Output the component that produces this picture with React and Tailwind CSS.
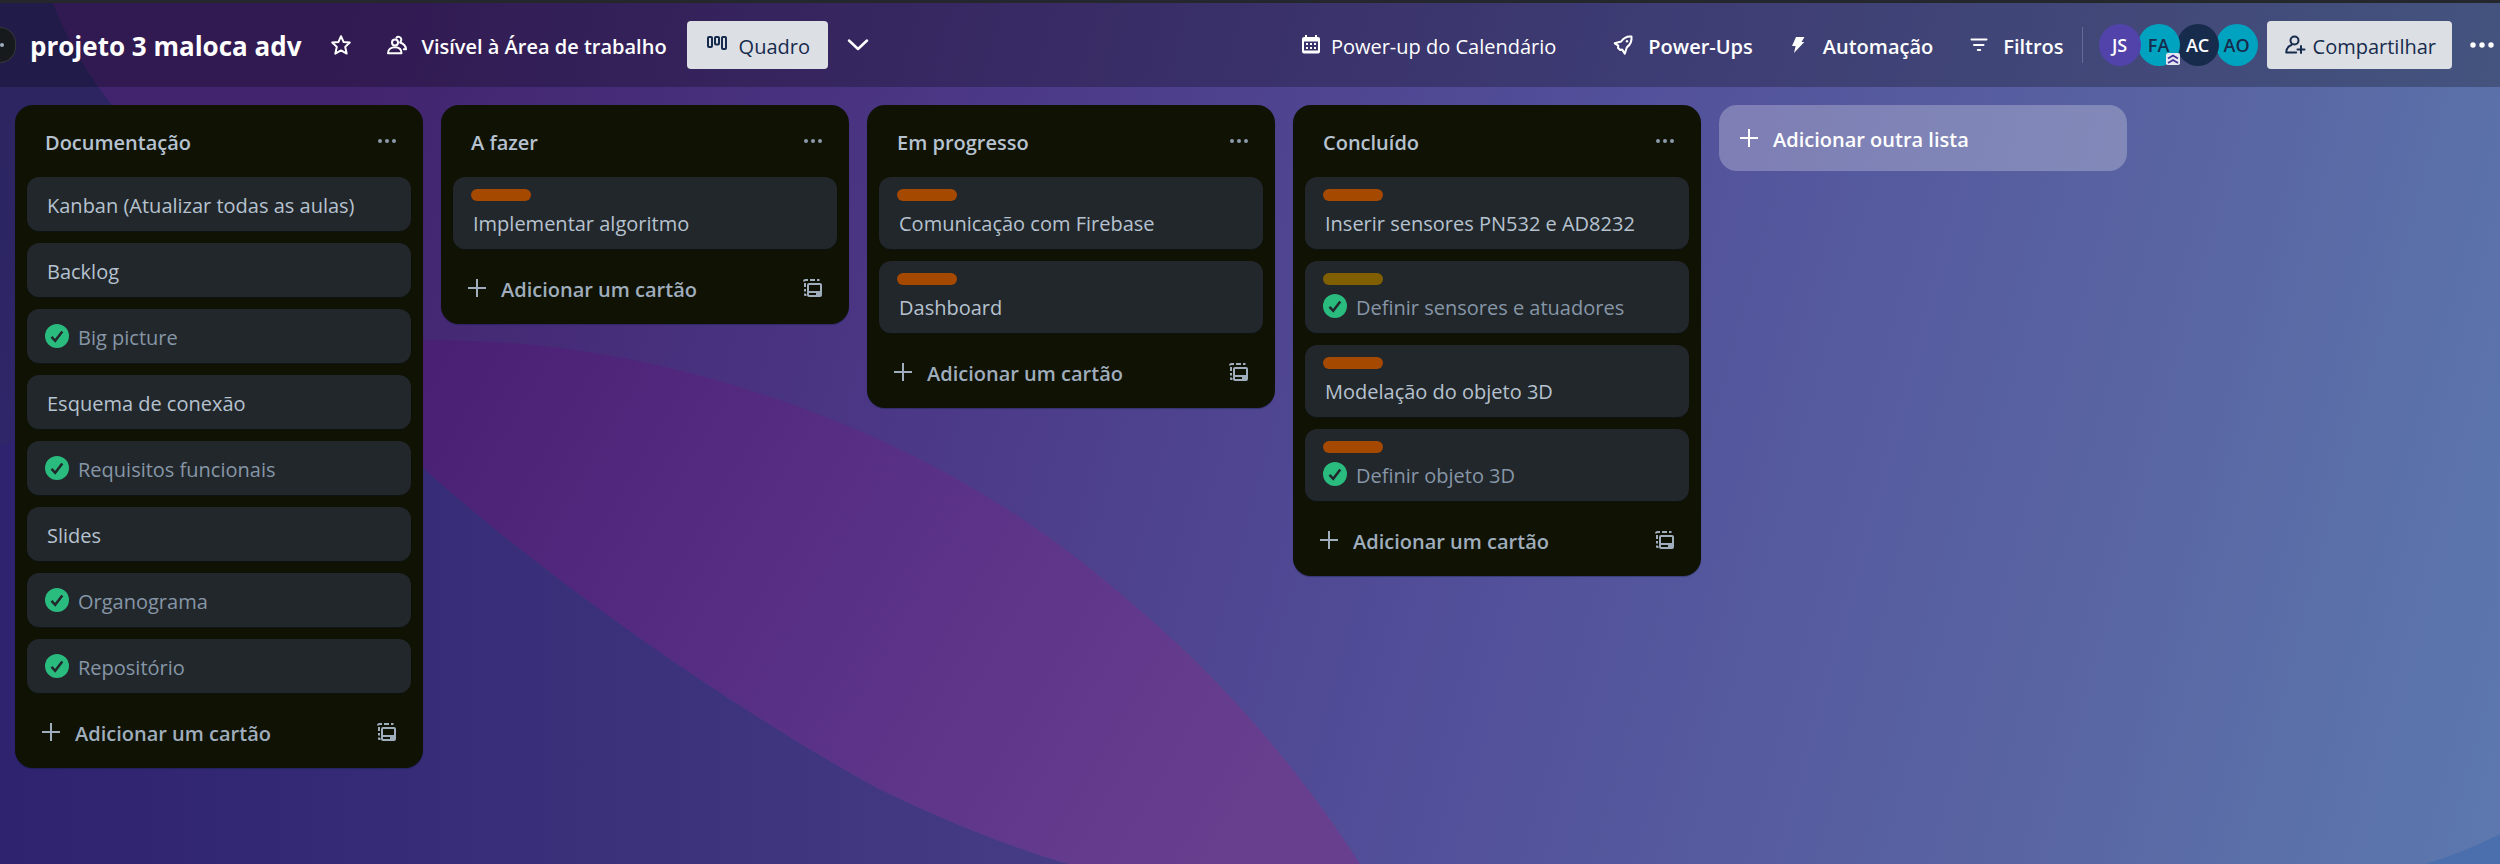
import React from "react";

const LISTS = [
  {
    title: "Documentação",
    cards: [
      { text: "Kanban (Atualizar todas as aulas)" },
      { text: "Backlog" },
      { text: "Big picture", done: true },
      { text: "Esquema de conexão" },
      { text: "Requisitos funcionais", done: true },
      { text: "Slides" },
      { text: "Organograma", done: true },
      { text: "Repositório", done: true },
    ],
  },
  { title: "A fazer", cards: [{ text: "Implementar algoritmo", label: "orange" }] },
  {
    title: "Em progresso",
    cards: [
      { text: "Comunicação com Firebase", label: "orange" },
      { text: "Dashboard", label: "orange" },
    ],
  },
  {
    title: "Concluído",
    cards: [
      { text: "Inserir sensores PN532 e AD8232", label: "orange" },
      { text: "Definir sensores e atuadores", label: "yellow", done: true },
      { text: "Modelação do objeto 3D", label: "orange" },
      { text: "Definir objeto 3D", label: "orange", done: true },
    ],
  },
];

const LABEL = { orange: "bg-[#a54800]", yellow: "bg-[#7f5f01]" };

const MEMBERS = [
  { initials: "JS", style: "bg-[#5243aa] text-white" },
  { initials: "FA", style: "bg-[#00a3bf] text-[#172b4d]", admin: true },
  { initials: "AC", style: "bg-[#172b4d] text-white" },
  { initials: "AO", style: "bg-[#00a3bf] text-[#172b4d]" },
];

function Icon({ children }) {
  return (
    <svg
      viewBox="0 0 24 24"
      className="size-6 shrink-0"
      fill="none"
      stroke="currentColor"
      strokeWidth="2"
      strokeLinecap="round"
      strokeLinejoin="round"
      aria-hidden="true"
    >
      {children}
    </svg>
  );
}

const StarIcon = () => (
  <Icon>
    <path d="M12 3.2l2.500 5.700 6.300.6-4.600 4.400 1.500 6.700-5.700-3.200-5.700 3.200 1.500-6.700-4.600-4.400 6.300-.6z" />
  </Icon>
);

const PeopleIcon = () => (
  <Icon>
    <circle cx="10" cy="9.500" r="3" />
    <path d="M3 20.200c0-3.700 3-6 7-6s6.500 2.300 6.500 6z" />
    <path d="M11.500 4.600c1.200-1.500 4.500-1 4.800 1.700.1 1.500-.4 2.400-1.200 3.200 3 1 5.600 3.200 5.900 6.800h-2.200" />
  </Icon>
);

const BoardIcon = () => (
  <Icon>
    <rect x="3" y="4" width="4" height="10" rx="1" />
    <rect x="10" y="4" width="4" height="7.500" rx="1" />
    <rect x="17" y="4" width="4" height="12" rx="1" />
  </Icon>
);

const ChevronIcon = () => (
  <Icon>
    <path d="M3 7.500l9 8.500 9-8.500" strokeWidth="2.500" />
  </Icon>
);

const CalendarIcon = () => (
  <Icon>
    <path
      fill="currentColor"
      stroke="none"
      fillRule="evenodd"
      d="M6 2h2v2h8V2h2v2h1a2 2 0 0 1 2 2v12.500a2 2 0 0 1-2 2H5a2 2 0 0 1-2-2V6a2 2 0 0 1 2-2h1zM5 8.500v9h14v-9z"
    />
    <path fill="currentColor" stroke="none" d="M7 10h2v2H7zm4 0h2v2h-2zm4 0h2v2h-2zM7 14h2v2H7zm4 0h2v2h-2zm4 0h2v2h-2z" />
  </Icon>
);

const RocketIcon = () => (
  <Icon>
    <path d="M19.500 3.500c-4.500-.6-7.500.8-10.300 5L2.700 10.300l3.600 2.400-.4 2 2.300 2.300 2-.4 2.600 4 2-6.200c4-3 5.200-6.500 4.700-10.900z" />
    <circle cx="15" cy="8.200" r="1.200" fill="currentColor" stroke="none" />
  </Icon>
);

const BoltIcon = () => (
  <Icon>
    <path fill="currentColor" stroke="none" d="M9 4h8.500l-3 5h2.800L7 20l1.600-7H5z" />
  </Icon>
);

const FilterIcon = () => (
  <Icon>
    <path d="M4.500 6.500h15M7 12h9.500M10.800 17h2.400" />
  </Icon>
);

const AddPersonIcon = () => (
  <Icon>
    <circle cx="11.500" cy="7.500" r="4" />
    <path d="M13.200 19.500H3.200c0-3.700 2-6.200 5.300-7.500" />
    <path d="M18 13v7M14.500 16.500h7" />
  </Icon>
);

const DotsIcon = () => (
  <Icon>
    <g fill="currentColor" stroke="none">
      <circle cx="5" cy="12" r="2" />
      <circle cx="12" cy="12" r="2" />
      <circle cx="19" cy="12" r="2" />
    </g>
  </Icon>
);

const WideDotsIcon = () => (
  <Icon>
    <g fill="currentColor" stroke="none">
      <circle cx="3" cy="12" r="2.700" />
      <circle cx="12" cy="12" r="2.700" />
      <circle cx="21" cy="12" r="2.700" />
    </g>
  </Icon>
);

const PlusIcon = () => (
  <Icon>
    <path d="M12 3v18M3 12h18" strokeLinecap="butt" />
  </Icon>
);

const TemplateIcon = () => (
  <Icon>
    <path d="M3 5.500C3 4.500 3.500 4 4.500 4H7M9 4h5M16 4h2.500M4 7v4M4 13v2.500M4 17.500V19h1.500" strokeLinecap="butt" />
    <rect x="7" y="8" width="13" height="12" rx="1" />
    <path d="M7 16h13" />
    <path d="M15 18h4" strokeLinecap="butt" />
  </Icon>
);

const CheckIcon = () => (
  <svg viewBox="0 0 24 24" className="size-6 shrink-0" role="img" aria-label="Concluído">
    <circle cx="12" cy="12" r="12" fill="#2abb7f" />
    <path d="M6.500 12.800l3.700 4L17.300 7.500" fill="none" stroke="#22272b" strokeWidth="2.500" />
  </svg>
);

function Backdrop() {
  return (
    <svg
      viewBox="0 0 2500 864"
      preserveAspectRatio="none"
      className="absolute inset-0 size-full"
      aria-hidden="true"
    >
      <defs>
        <linearGradient id="sky" gradientUnits="userSpaceOnUse" x1="300" y1="200" x2="2500" y2="800">
          <stop offset="0" stopColor="#42236d" />
          <stop offset="0.280" stopColor="#4b3886" />
          <stop offset="0.550" stopColor="#52509a" />
          <stop offset="0.800" stopColor="#5965a3" />
          <stop offset="1" stopColor="#5c78ae" />
        </linearGradient>
        <linearGradient id="deep" gradientUnits="userSpaceOnUse" x1="0" y1="864" x2="1060" y2="864">
          <stop offset="0" stopColor="#2f226e" />
          <stop offset="0.400" stopColor="#362c77" />
          <stop offset="1" stopColor="#453c85" />
        </linearGradient>
        <linearGradient id="petal" gradientUnits="userSpaceOnUse" x1="420" y1="400" x2="1220" y2="864">
          <stop offset="0" stopColor="#4a2074" />
          <stop offset="0.500" stopColor="#583086" />
          <stop offset="1" stopColor="#683f8f" />
        </linearGradient>
        <linearGradient id="edge" gradientUnits="userSpaceOnUse" x1="0" y1="0" x2="0" y2="445">
          <stop offset="0" stopColor="#2b2560" />
          <stop offset="1" stopColor="#2e2668" />
        </linearGradient>
      </defs>
      <rect width="2500" height="864" fill="url(#sky)" />
      <path d="M52 0C70 50 100 90 112 105L300 400L0 445V0Z" fill="url(#edge)" />
      <path d="M0 445L300 340L430 474C520 555 700 690 877 788Q980 838 1068 864H0Z" fill="url(#deep)" />
      <path
        d="M300 350C480 325 640 350 797 406C910 447 1020 507 1116 590C1220 675 1300 770 1360 864H1068Q980 838 877 788C700 690 520 555 430 474L300 350Z"
        fill="url(#petal)"
      />
      <path d="M2425 864Q2465 852 2500 834V864Z" fill="#4a6fac" />
    </svg>
  );
}

function HeaderButton({ icon, children, regular }) {
  return (
    <button
      type="button"
      className={
        regular
          ? "flex h-12 items-center gap-2 whitespace-nowrap rounded-sm"
          : "flex h-12 items-center gap-3 whitespace-nowrap rounded-sm font-semibold"
      }
    >
      {icon}
      <span className="pt-[3px]">{children}</span>
    </button>
  );
}

function Header() {
  return (
    <header className="relative flex h-[87px] items-center justify-between border-t-[3px] border-[#24272b] bg-black/25 pr-[6px] text-xl text-white">
      <div className="flex items-center">
        <button
          type="button"
          aria-label="Expandir barra lateral"
          className="flex h-9 w-4 items-center justify-start rounded-r-full border border-l-0 border-[#33373d] bg-[#161a1d] text-[#9fadbc]"
        >
          <span className="size-1 rounded-full bg-[#9fadbc]" />
        </button>
        <h1 className="ml-[14px] whitespace-nowrap pt-[3px] text-[26px] font-bold">projeto 3 maloca adv</h1>
        <button type="button" aria-label="Favoritar quadro" className="ml-7">
          <StarIcon />
        </button>
        <div className="ml-8">
          <HeaderButton icon={<PeopleIcon />}>Visível à Área de trabalho</HeaderButton>
        </div>
        <button
          type="button"
          className="ml-5 flex h-12 items-center gap-[10px] rounded-sm bg-[#dcdfe4] px-[18px] font-medium text-[#172b4d]"
        >
          <BoardIcon />
          <span className="pt-[3px]">Quadro</span>
        </button>
        <button type="button" aria-label="Mais visualizações" className="ml-[18px]">
          <ChevronIcon />
        </button>
      </div>
      <div className="flex items-center">
        <div className="flex items-center gap-14">
          <HeaderButton regular icon={<CalendarIcon />}>
            Power-up do Calendário
          </HeaderButton>
          <div className="flex items-center gap-[34px]">
            <HeaderButton icon={<RocketIcon />}>Power-Ups</HeaderButton>
            <HeaderButton icon={<BoltIcon />}>Automação</HeaderButton>
            <HeaderButton icon={<FilterIcon />}>Filtros</HeaderButton>
          </div>
        </div>
        <span className="ml-[18px] h-9 w-px bg-white/20" />
        <ul className="ml-4 flex -space-x-[3px]">
          {MEMBERS.map((m, i) => (
            <li key={m.initials} className="relative" style={{ zIndex: MEMBERS.length - i }}>
              <button
                type="button"
                className={`flex size-[42px] items-center justify-center rounded-full text-lg font-semibold ${m.style}`}
              >
                {m.initials}
              </button>
              {m.admin && (
                <svg viewBox="0 0 14 13" className="absolute right-0 bottom-0 h-[13px] w-[14px]" aria-hidden="true">
                  <path d="M0 2q0-2 2-2h10q2 0 2 2v9q-1 1-2 1H2q-1 0-2-1z" fill="#e4e6f0" />
                  <path d="M2 5.500l5-3 5 3M2 10l5-3 5 3" fill="none" stroke="#403294" strokeWidth="1.800" />
                </svg>
              )}
            </li>
          ))}
        </ul>
        <button
          type="button"
          className="ml-[9px] flex h-12 items-center gap-[6px] rounded-sm bg-[#dcdfe4] px-4 font-medium text-[#172b4d]"
        >
          <AddPersonIcon />
          <span className="pt-[3px]">Compartilhar</span>
        </button>
        <button type="button" aria-label="Mostrar menu" className="ml-[18px]">
          <WideDotsIcon />
        </button>
      </div>
    </header>
  );
}

function Card({ card }) {
  return (
    <li className="rounded-xl bg-[#22272b] px-[18px] py-3 shadow-[0_1px_1px_#091e4240]">
      {card.label && <div className={`mb-[6px] h-3 w-[60px] rounded-full ${LABEL[card.label]}`} />}
      <div className="flex h-[30px] items-center gap-[9px]">
        {card.done && <CheckIcon />}
        <span className={card.done ? "pt-[3px] text-[#8696a7]" : "pt-[3px] pl-[2px] text-[#b6c2cf]"}>
          {card.text}
        </span>
      </div>
    </li>
  );
}

function List({ list }) {
  return (
    <section className="w-[408px] shrink-0 rounded-[18px] bg-[#101204] px-3 pb-3 text-[#9fadbc] shadow-[0_1px_1px_#091e4260]">
      <div className="flex h-[72px] items-center justify-between pl-[18px] pr-3">
        <h2 className="pt-[3px] font-semibold text-[#b6c2cf]">{list.title}</h2>
        <button type="button" aria-label="Ações da lista" className="text-[#8c9bab]">
          <DotsIcon />
        </button>
      </div>
      <ul className="flex flex-col gap-3">
        {list.cards.map((card) => (
          <Card key={card.text} card={card} />
        ))}
      </ul>
      <div className="mt-[15px] flex h-12 items-center justify-between px-3">
        <button type="button" className="flex items-center gap-3 font-semibold">
          <PlusIcon />
          <span className="pt-[3px]">Adicionar um cartão</span>
        </button>
        <button type="button" aria-label="Criar de um modelo">
          <TemplateIcon />
        </button>
      </div>
    </section>
  );
}

export default function App() {
  return (
    <div className="relative min-h-screen overflow-hidden bg-[#42236d] font-['Open_Sans','Noto_Sans',sans-serif] text-xl">
      <Backdrop />
      <Header />
      <main className="relative flex items-start gap-[18px] px-[15px] py-[18px]">
        {LISTS.map((list) => (
          <List key={list.title} list={list} />
        ))}
        <button
          type="button"
          className="flex h-[66px] w-[408px] shrink-0 items-center gap-3 rounded-[18px] bg-white/25 px-[18px] font-semibold text-white"
        >
          <PlusIcon />
          <span className="pt-[3px]">Adicionar outra lista</span>
        </button>
      </main>
    </div>
  );
}
